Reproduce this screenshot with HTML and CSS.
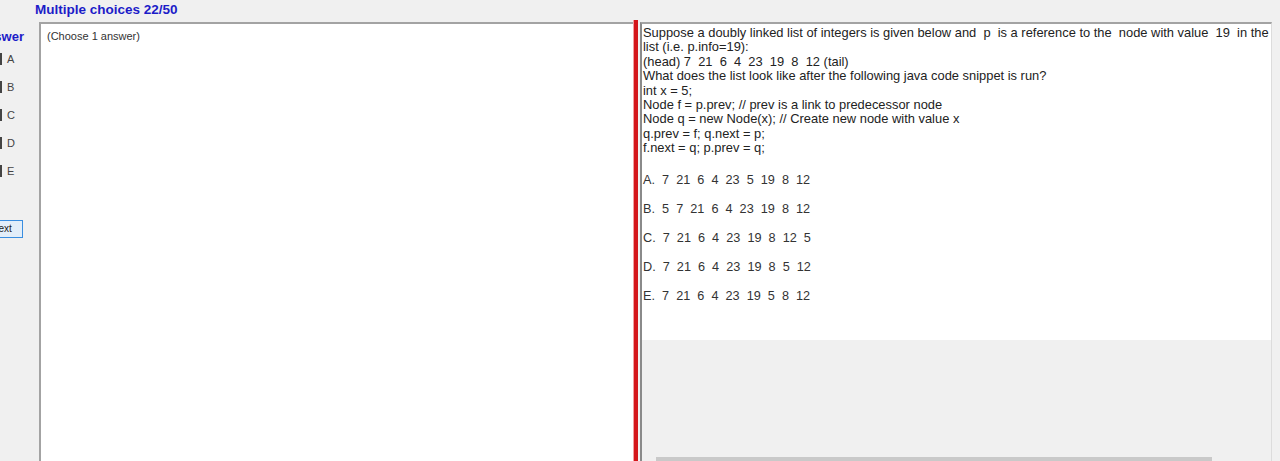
FILE: index.html
```html
<!DOCTYPE html>
<html>
<head>
<meta charset="utf-8">
<link rel="stylesheet" href="styles.css">
</head>
<body>
<div class="app">
  <div class="header"><span class="title">Multiple choices 22/50</span></div>
  <div class="main">
    <div class="sidebar">
      <div class="answer-label">Answer</div>
      <div class="opts">
        <div class="opt"><span class="box"></span>A</div>
        <div class="opt"><span class="box"></span>B</div>
        <div class="opt"><span class="box"></span>C</div>
        <div class="opt"><span class="box"></span>D</div>
        <div class="opt"><span class="box"></span>E</div>
      </div>
      <div class="next">Next</div>
    </div>
    <div class="left-panel">
      <div class="choose">(Choose 1 answer)</div>
    </div>
    <div class="divider"></div>
    <div class="right-panel">
      <div class="question">
        <div class="qtext">Suppose a doubly linked list of integers is given below and&nbsp; p&nbsp; is a reference to the&nbsp; node with value&nbsp; 19&nbsp; in the list (i.e. p.info=19):<br>(head) 7&nbsp; 21&nbsp; 6&nbsp; 4&nbsp; 23&nbsp; 19&nbsp; 8&nbsp; 12 (tail)<br>What does the list look like after the following java code snippet is run?<br>int x = 5;<br>Node f = p.prev; // prev is a link to predecessor node<br>Node q = new Node(x); // Create new node with value x<br>q.prev = f; q.next = p;<br>f.next = q; p.prev = q;</div>
        <div class="answers">
          <div class="ans">A.&nbsp; 7&nbsp; 21&nbsp; 6&nbsp; 4&nbsp; 23&nbsp; 5&nbsp; 19&nbsp; 8&nbsp; 12</div>
          <div class="ans">B.&nbsp; 5&nbsp; 7&nbsp; 21&nbsp; 6&nbsp; 4&nbsp; 23&nbsp; 19&nbsp; 8&nbsp; 12</div>
          <div class="ans">C.&nbsp; 7&nbsp; 21&nbsp; 6&nbsp; 4&nbsp; 23&nbsp; 19&nbsp; 8&nbsp; 12&nbsp; 5</div>
          <div class="ans">D.&nbsp; 7&nbsp; 21&nbsp; 6&nbsp; 4&nbsp; 23&nbsp; 19&nbsp; 8&nbsp; 5&nbsp; 12</div>
          <div class="ans">E.&nbsp; 7&nbsp; 21&nbsp; 6&nbsp; 4&nbsp; 23&nbsp; 19&nbsp; 5&nbsp; 8&nbsp; 12</div>
        </div>
      </div>
      <div class="lower">
        <div class="scroll"><div class="thumb"></div></div>
      </div>
    </div>
  </div>
</div>
</body>
</html>
```
FILE: styles.css
```css
html, body {
  margin: 0;
  padding: 0;
  background: #f0f0f0;
  font-family: "Liberation Sans", Arial, sans-serif;
  overflow: hidden;
}
.app {
  width: 1280px;
  height: 461px;
  display: flex;
  flex-direction: column;
}
.header {
  height: 20px;
  padding-left: 35px;
  box-sizing: border-box;
  line-height: 18px;
}
.title {
  font-weight: bold;
  font-size: 13.5px;
  color: #1c1cc8;
}
.main {
  flex: 1;
  display: flex;
  min-height: 0;
}
.sidebar {
  width: 39px;
  overflow: hidden;
  display: flex;
  flex-direction: column;
  flex-shrink: 0;
}
.answer-label {
  margin-left: -23px;
  margin-top: 9px;
  font-weight: bold;
  font-size: 13px;
  color: #1c1cc8;
  white-space: nowrap;
}
.opts {
  margin-top: 8px;
  display: flex;
  flex-direction: column;
  gap: 14px;
}
.opt {
  display: flex;
  align-items: center;
  height: 14px;
  font-size: 11px;
  color: #444;
  margin-left: -10px;
}
.box {
  width: 12px;
  height: 12px;
  border-right: 2px solid #444;
  box-sizing: border-box;
  margin-right: 5px;
}
.next {
  margin-top: 42px;
  margin-left: -20px;
  width: 43px;
  height: 18px;
  box-sizing: border-box;
  border: 1px solid #3a8ee0;
  background: #e3eef9;
  font-size: 10px;
  color: #222;
  text-align: center;
  line-height: 16px;
}
.left-panel {
  width: 594px;
  margin-top: 2px;
  background: #fff;
  border-top: 2px solid #a3a3a3;
  border-left: 2px solid #a3a3a3;
  box-sizing: border-box;
  flex-shrink: 0;
}
.choose {
  font-size: 11px;
  color: #333;
  padding: 6px 0 0 6px;
}
.divider {
  width: 5px;
  background: #d4161a;
  border-left: 1px solid #f0a0a0;
  box-sizing: border-box;
  flex-shrink: 0;
}
.right-panel {
  width: 632px;
  margin-left: 2px;
  margin-top: 2px;
  border-top: 2px solid #a3a3a3;
  border-left: 2px solid #8a8a8a;
  border-right: 1px solid #dcdcdc;
  box-sizing: border-box;
  display: flex;
  flex-direction: column;
  flex-shrink: 0;
}
.question {
  background: #fff;
  height: 316px;
  padding: 2px 0 0 1px;
  box-sizing: border-box;
}
.qtext {
  font-size: 12.9px;
  line-height: 14.4px;
  color: #222;
}
.answers {
  margin-top: 16px;
  display: flex;
  flex-direction: column;
  gap: 12px;
}
.ans {
  font-size: 12.7px;
  line-height: 17px;
  color: #333;
  white-space: nowrap;
}
.lower {
  flex: 1;
  display: flex;
  flex-direction: column;
  justify-content: flex-end;
}
.scroll {
  height: 4px;
  padding-left: 14px;
}
.thumb {
  width: 556px;
  height: 4px;
  background: #c9c9c9;
}
```
